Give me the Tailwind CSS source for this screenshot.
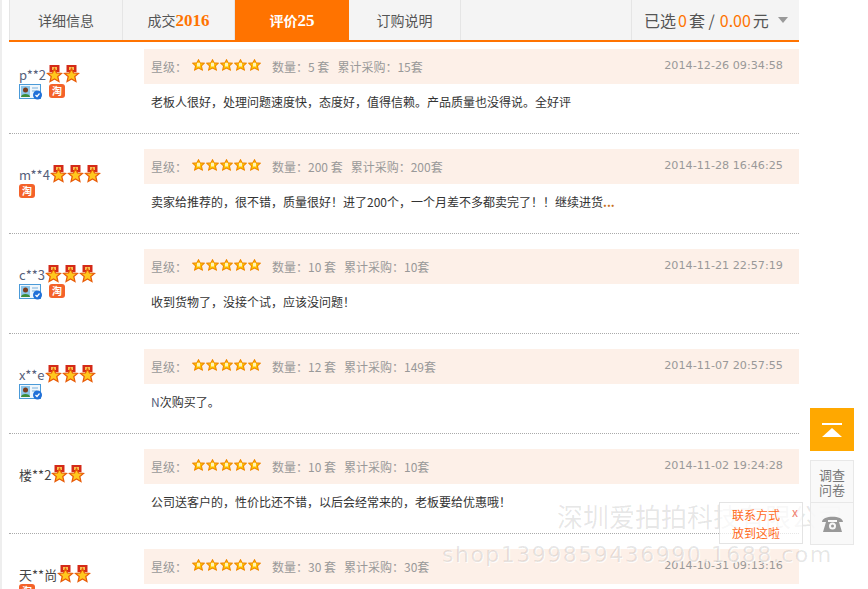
<!DOCTYPE html>
<html><head><meta charset="utf-8"><script src="https://cdn.jsdelivr.net/npm/@tailwindcss/browser@4"></script></head>
<body class="bg-white">
<svg width="0" height="0" class="absolute">
<defs>
<symbol id="medal" viewBox="0 0 17 18"><path d="M3.500 0h10v7h-10z" fill="#d42a18"/><path d="M6 2h5v3H6z" fill="#f8c050"/><path d="M8.500 3.500l2 4.400 5 .5-3.700 3.200 1.100 4.900-4.400-2.600-4.400 2.600 1.100-4.900L1.500 8.400l5-.5z" fill="#ffc81e" stroke="#e85c08" stroke-width="1.300"/></symbol>
<symbol id="star" viewBox="0 0 13 12"><path d="M6.500 .8l1.700 3.100 4 .4-2.800 2.600.9 4-3.800-1.900-3.800 1.900.9-4L.8 4.300l4-.4z" fill="#ffc400" stroke="#f08800" stroke-width="1.100"/><path d="M5 3.800h3v3.700H5z" fill="#fff4b8"/></symbol>
<symbol id="card" viewBox="0 0 24 16"><rect x=".5" y=".5" width="21" height="14" fill="#eef6fc" stroke="#4a9ad8"/><rect x="2" y="2" width="9" height="11" fill="#8cc4e8"/><circle cx="6.500" cy="6" r="2.500" fill="#7a3c1c"/><path d="M2 13c0-4 9-4 9 0z" fill="#3c8c3c"/><path d="M13 4h6M13 7h5" stroke="#7ab0dc"/><circle cx="18.500" cy="11" r="4.500" fill="#2070d8"/><path d="M16.500 11l1.500 1.500 2.500-3" stroke="#fff" stroke-width="1.200" fill="none"/></symbol>
</defs>
</svg>

<div class="relative h-[589px] w-[868px] overflow-hidden border-l-2 border-[#eeeeee] font-['Noto_Sans_CJK_SC','Noto_Sans',sans-serif] text-xs text-[#333]">
  <div class="ml-[7px] w-[790px]">
    <div class="flex h-[42px] border-b-2 border-[#ff7300] bg-[#f4f4f4] text-sm leading-[40px] text-[#555]">
      <div class="w-[114px] border-x border-[#e5e5e5] text-center">详细信息</div>
      <div class="w-[112px] border-r border-[#e5e5e5] text-center">成交<b class="font-['Liberation_Serif',serif] text-[17px] text-[#ff7300]">2016</b></div>
      <div class="w-[114px] bg-[#ff7300] text-center font-bold text-white">评价<span class="font-['Liberation_Serif',serif] text-[17px]">25</span></div>
      <div class="w-[112px] border-r border-[#e5e5e5] text-center">订购说明</div>
      <div class="flex-1 border-r border-[#e5e5e5]"></div>
      <div class="flex w-[167px] items-center pl-[12px] text-[16px] leading-none">
        <span>已选</span><span class="ml-[2px] text-[#ff7300]">0</span><span class="ml-[2px]">套 /</span><span class="ml-[5px] text-[#ff7300]">0.00</span><span class="ml-[2px]">元</span>
        <span class="ml-[9px] h-0 w-0 border-x-[5px] border-t-[6px] border-x-transparent border-t-[#999]"></span>
      </div>
    </div>

    <div class="flex h-[92px] border-b border-dotted border-[#aaa] pt-[7px]">
      <div class="w-[135px] pt-[14px] pl-[10px]">
        <div class="flex h-[21px] items-center text-[13px] text-[#56607a]"><span class="pt-[2px]">p**2</span><svg class="h-[18px] w-[17px]"><use href="#medal"/></svg><svg class="h-[18px] w-[17px]"><use href="#medal"/></svg></div>
        <div class="flex gap-[6px]"><svg class="h-4 w-6"><use href="#card"/></svg><span class="h-[14px] w-4 rounded-[3px] bg-[#f4622a] text-center text-[10px] leading-[14px] font-bold text-white">淘</span></div>
      </div>
      <div class="flex-1">
        <div class="flex h-[35px] items-center bg-[#fdf0e8] pr-4 pl-[7px] text-[#999]">
          <span>星级：</span>
          <span class="mr-[11px] ml-[5px] flex -translate-y-[2px] gap-px"><svg class="h-3 w-[13px]"><use href="#star"/></svg><svg class="h-3 w-[13px]"><use href="#star"/></svg><svg class="h-3 w-[13px]"><use href="#star"/></svg><svg class="h-3 w-[13px]"><use href="#star"/></svg><svg class="h-3 w-[13px]"><use href="#star"/></svg></span>
          <span class="mr-2">数量：5 套</span><span>累计采购：15套</span>
          <span class="ml-auto font-['DejaVu_Sans',sans-serif] text-[11.200px]">2014-12-26 09:34:58</span>
        </div>
        <p class="pt-[9px] pl-[7px] leading-[18px]">老板人很好，处理问题速度快，态度好，值得信赖。产品质量也没得说。全好评</p>
      </div>
    </div>

    <div class="flex h-[100px] border-b border-dotted border-[#aaa] pt-[15px]">
      <div class="w-[135px] pt-[14px] pl-[10px]">
        <div class="flex h-[21px] items-center text-[13px] text-[#56607a]"><span class="pt-[2px]">m**4</span><svg class="h-[18px] w-[17px]"><use href="#medal"/></svg><svg class="h-[18px] w-[17px]"><use href="#medal"/></svg><svg class="h-[18px] w-[17px]"><use href="#medal"/></svg></div>
        <div class="flex gap-[6px]"><span class="h-[14px] w-4 rounded-[3px] bg-[#f4622a] text-center text-[10px] leading-[14px] font-bold text-white">淘</span></div>
      </div>
      <div class="flex-1">
        <div class="flex h-[35px] items-center bg-[#fdf0e8] pr-4 pl-[7px] text-[#999]">
          <span>星级：</span>
          <span class="mr-[11px] ml-[5px] flex -translate-y-[2px] gap-px"><svg class="h-3 w-[13px]"><use href="#star"/></svg><svg class="h-3 w-[13px]"><use href="#star"/></svg><svg class="h-3 w-[13px]"><use href="#star"/></svg><svg class="h-3 w-[13px]"><use href="#star"/></svg><svg class="h-3 w-[13px]"><use href="#star"/></svg></span>
          <span class="mr-2">数量：200 套</span><span>累计采购：200套</span>
          <span class="ml-auto font-['DejaVu_Sans',sans-serif] text-[11.200px]">2014-11-28 16:46:25</span>
        </div>
        <p class="pt-[9px] pl-[7px] leading-[18px]">卖家给推荐的，很不错，质量很好！进了200个，一个月差不多都卖完了！！继续进货<b class="text-[#c87020]">...</b></p>
      </div>
    </div>

    <div class="flex h-[100px] border-b border-dotted border-[#aaa] pt-[15px]">
      <div class="w-[135px] pt-[14px] pl-[10px]">
        <div class="flex h-[21px] items-center text-[13px] text-[#56607a]"><span class="pt-[2px]">c**3</span><svg class="h-[18px] w-[17px]"><use href="#medal"/></svg><svg class="h-[18px] w-[17px]"><use href="#medal"/></svg><svg class="h-[18px] w-[17px]"><use href="#medal"/></svg></div>
        <div class="flex gap-[6px]"><svg class="h-4 w-6"><use href="#card"/></svg><span class="h-[14px] w-4 rounded-[3px] bg-[#f4622a] text-center text-[10px] leading-[14px] font-bold text-white">淘</span></div>
      </div>
      <div class="flex-1">
        <div class="flex h-[35px] items-center bg-[#fdf0e8] pr-4 pl-[7px] text-[#999]">
          <span>星级：</span>
          <span class="mr-[11px] ml-[5px] flex -translate-y-[2px] gap-px"><svg class="h-3 w-[13px]"><use href="#star"/></svg><svg class="h-3 w-[13px]"><use href="#star"/></svg><svg class="h-3 w-[13px]"><use href="#star"/></svg><svg class="h-3 w-[13px]"><use href="#star"/></svg><svg class="h-3 w-[13px]"><use href="#star"/></svg></span>
          <span class="mr-2">数量：10 套</span><span>累计采购：10套</span>
          <span class="ml-auto font-['DejaVu_Sans',sans-serif] text-[11.200px]">2014-11-21 22:57:19</span>
        </div>
        <p class="pt-[9px] pl-[7px] leading-[18px]">收到货物了，没接个试，应该没问题！</p>
      </div>
    </div>

    <div class="flex h-[100px] border-b border-dotted border-[#aaa] pt-[15px]">
      <div class="w-[135px] pt-[14px] pl-[10px]">
        <div class="flex h-[21px] items-center text-[13px] text-[#56607a]"><span class="pt-[2px]">x**e</span><svg class="h-[18px] w-[17px]"><use href="#medal"/></svg><svg class="h-[18px] w-[17px]"><use href="#medal"/></svg><svg class="h-[18px] w-[17px]"><use href="#medal"/></svg></div>
        <div class="flex gap-[6px]"><svg class="h-4 w-6"><use href="#card"/></svg></div>
      </div>
      <div class="flex-1">
        <div class="flex h-[35px] items-center bg-[#fdf0e8] pr-4 pl-[7px] text-[#999]">
          <span>星级：</span>
          <span class="mr-[11px] ml-[5px] flex -translate-y-[2px] gap-px"><svg class="h-3 w-[13px]"><use href="#star"/></svg><svg class="h-3 w-[13px]"><use href="#star"/></svg><svg class="h-3 w-[13px]"><use href="#star"/></svg><svg class="h-3 w-[13px]"><use href="#star"/></svg><svg class="h-3 w-[13px]"><use href="#star"/></svg></span>
          <span class="mr-2">数量：12 套</span><span>累计采购：149套</span>
          <span class="ml-auto font-['DejaVu_Sans',sans-serif] text-[11.200px]">2014-11-07 20:57:55</span>
        </div>
        <p class="pt-[9px] pl-[7px] leading-[18px]"><span class="text-[#56607a]">N</span>次购买了。</p>
      </div>
    </div>

    <div class="flex h-[100px] border-b border-dotted border-[#aaa] pt-[15px]">
      <div class="w-[135px] pt-[14px] pl-[10px]">
        <div class="flex h-[21px] items-center text-[13px] text-[#444]"><span class="pt-[2px]">楼**2</span><svg class="h-[18px] w-[17px]"><use href="#medal"/></svg><svg class="h-[18px] w-[17px]"><use href="#medal"/></svg></div>
      </div>
      <div class="flex-1">
        <div class="flex h-[35px] items-center bg-[#fdf0e8] pr-4 pl-[7px] text-[#999]">
          <span>星级：</span>
          <span class="mr-[11px] ml-[5px] flex -translate-y-[2px] gap-px"><svg class="h-3 w-[13px]"><use href="#star"/></svg><svg class="h-3 w-[13px]"><use href="#star"/></svg><svg class="h-3 w-[13px]"><use href="#star"/></svg><svg class="h-3 w-[13px]"><use href="#star"/></svg><svg class="h-3 w-[13px]"><use href="#star"/></svg></span>
          <span class="mr-2">数量：10 套</span><span>累计采购：10套</span>
          <span class="ml-auto font-['DejaVu_Sans',sans-serif] text-[11.200px]">2014-11-02 19:24:28</span>
        </div>
        <p class="pt-[9px] pl-[7px] leading-[18px]">公司送客户的，性价比还不错，以后会经常来的，老板要给优惠哦！</p>
      </div>
    </div>

    <div class="flex h-[100px] pt-[15px]">
      <div class="w-[135px] pt-[14px] pl-[10px]">
        <div class="flex h-[21px] items-center text-[13px] text-[#444]"><span class="pt-[2px]">天**尚</span><svg class="h-[18px] w-[17px]"><use href="#medal"/></svg><svg class="h-[18px] w-[17px]"><use href="#medal"/></svg></div>
        <div class="flex gap-[6px]"><span class="h-[14px] w-4 rounded-[3px] bg-[#f4622a] text-center text-[10px] leading-[14px] font-bold text-white">淘</span></div>
      </div>
      <div class="flex-1">
        <div class="flex h-[35px] items-center bg-[#fdf0e8] pr-4 pl-[7px] text-[#999]">
          <span>星级：</span>
          <span class="mr-[11px] ml-[5px] flex -translate-y-[2px] gap-px"><svg class="h-3 w-[13px]"><use href="#star"/></svg><svg class="h-3 w-[13px]"><use href="#star"/></svg><svg class="h-3 w-[13px]"><use href="#star"/></svg><svg class="h-3 w-[13px]"><use href="#star"/></svg><svg class="h-3 w-[13px]"><use href="#star"/></svg></span>
          <span class="mr-2">数量：30 套</span><span>累计采购：30套</span>
          <span class="ml-auto font-['DejaVu_Sans',sans-serif] text-[11.200px]">2014-10-31 09:13:16</span>
        </div>
      </div>
    </div>
  </div>

  <!-- watermark -->
  <div class="pointer-events-none absolute top-[501px] left-[555px] text-[26px] leading-[30px] whitespace-nowrap text-black/10 [text-shadow:1px_1px_0_rgba(255,255,255,0.8)]">深圳爱拍拍科技有限公司</div>
  <div class="pointer-events-none absolute top-[540px] left-[440px] font-['DejaVu_Sans',sans-serif] text-[22px] leading-[30px] tracking-[1.500px] whitespace-nowrap text-black/10 [text-shadow:1px_1px_0_rgba(255,255,255,0.8)]">shop1399859436990.1688.com</div>

  <!-- floating side tools -->
  <div class="absolute top-[408px] left-[808px] flex h-[43px] w-[44px] flex-col items-center justify-center bg-[#ffa800]">
    <span class="h-[2px] w-5 bg-white"></span>
    <span class="mt-[3px] h-0 w-0 border-x-[10px] border-b-[9px] border-x-transparent border-b-white"></span>
  </div>
  <div class="absolute top-[460px] left-[808px] w-[44px] border border-[#e8e8e8] bg-[#f8f8f8]/90 text-center text-[#777]">
    <div class="h-[42px] border-b border-[#e8e8e8] pt-[6px] text-[13px] leading-[15px]">调查<br>问卷</div>
    <div class="flex h-[41px] items-center justify-center">
      <svg width="21" height="16" viewBox="0 0 21 16"><path d="M0 6C0-1 21-1 21 6H15V4H6v2z" fill="#999"/><path d="M4 6h13l3 10H1z" fill="#999"/><circle cx="10.500" cy="10" r="3.500" fill="#f8f8f8"/><circle cx="10.500" cy="10" r="1.500" fill="#999"/></svg>
    </div>
  </div>

  <!-- popup -->
  <div class="absolute top-[502px] left-[717px] h-[42px] w-[84px] border border-[#e4e4e4] bg-white/70 pt-[3px] pl-[12px] text-[#ff6a1a]">
    <div class="text-[12px] leading-[18px]">联系方式<br>放到这啦</div>
    <span class="absolute top-[1px] right-[4px] text-xs text-[#f08070]">x</span>
  </div>
</div>
</body></html>
